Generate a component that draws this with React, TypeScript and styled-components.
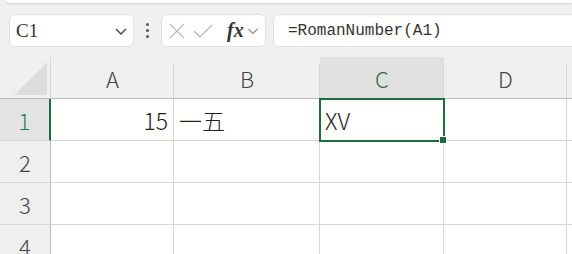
import React from "react";
import styled, { createGlobalStyle } from "styled-components";

const GlobalStyle = createGlobalStyle`
  html, body {
    margin: 0;
    padding: 0;
    background: #f0f0ef;
    overflow: hidden;
  }
  body {
    font-family: "Noto Sans CJK JP", "Noto Sans", sans-serif;
  }
`;

const columns = [
  { name: "A", width: 123 },
  { name: "B", width: 146 },
  { name: "C", width: 124 },
  { name: "D", width: 123 },
];

const rows: { n: number; cells: { text: string; align?: "left" | "right" }[] }[] = [
  { n: 1, cells: [{ text: "15", align: "right" }, { text: "一五" }, { text: "XV" }, { text: "" }] },
  { n: 2, cells: [{ text: "" }, { text: "" }, { text: "" }, { text: "" }] },
  { n: 3, cells: [{ text: "" }, { text: "" }, { text: "" }, { text: "" }] },
  { n: 4, cells: [{ text: "" }, { text: "" }, { text: "" }, { text: "" }] },
];

const App = () => {
  const template = `51px ${columns.map((c) => c.width + "px").join(" ")} 1fr`;
  return (
    <Page>
      <GlobalStyle />
      <Ribbon />
      <Toolbar>
        <NameBox>
          <span>C1</span>
          <Chevron width="16" height="16" viewBox="0 0 16 16">
            <path d="M3 6l5 5 5-5" fill="none" stroke="#444" strokeWidth="1.4" />
          </Chevron>
        </NameBox>
        <Dots>
          <i />
          <i />
          <i />
        </Dots>
        <FxBox>
          <svg width="18" height="18" viewBox="0 0 18 18">
            <path d="M2 2l14 14M16 2L2 16" stroke="#bdbdbd" strokeWidth="1.4" />
          </svg>
          <svg width="22" height="18" viewBox="0 0 22 18">
            <path d="M2 9l6 6L20 3" fill="none" stroke="#bdbdbd" strokeWidth="1.4" />
          </svg>
          <FxLabel>fx</FxLabel>
          <svg width="12" height="12" viewBox="0 0 12 12">
            <path d="M1.5 4l4.5 4.5L10.5 4" fill="none" stroke="#888" strokeWidth="1.1" />
          </svg>
        </FxBox>
        <FormulaBox>=RomanNumber(A1)</FormulaBox>
      </Toolbar>
      <Grid style={{ gridTemplateColumns: template }}>
        <Corner />
        {columns.map((c) => (
          <ColHeader key={c.name} $active={c.name === "C"}>
            {c.name}
          </ColHeader>
        ))}
        <ColHeader $active={false} />
        {rows.map((r) => (
          <React.Fragment key={r.n}>
            <RowHeader $active={r.n === 1}>{r.n}</RowHeader>
            {r.cells.map((cell, i) => (
              <Cell
                key={i}
                $align={cell.align || "left"}
                $selected={r.n === 1 && i === 2}
              >
                {cell.text}
                {r.n === 1 && i === 2 && <Handle />}
              </Cell>
            ))}
            <Cell $align="left" $selected={false} />
          </React.Fragment>
        ))}
      </Grid>
    </Page>
  );
};

export default App;

const Page = styled.div`
  width: 572px;
  height: 254px;
  overflow: hidden;
`;

const Ribbon = styled.div`
  height: 3px;
  margin-left: 6px;
  background: #ffffff;
  border-radius: 0 0 0 6px;
  box-shadow: 0 1px 2px rgba(0, 0, 0, 0.12);
`;

const Toolbar = styled.div`
  display: flex;
  align-items: center;
  height: 33px;
  margin-top: 11px;
  padding-left: 9px;
  margin-bottom: 10px;
`;

const NameBox = styled.div`
  width: 125px;
  height: 33px;
  box-sizing: border-box;
  display: flex;
  align-items: center;
  justify-content: space-between;
  padding: 0 4px 0 6px;
  background: #fffffd;
  border: 1px solid #e2e2e2;
  border-radius: 6px;
  font-family: "Liberation Serif", "DejaVu Serif", serif;
  font-size: 19px;
  color: #333;
`;

const Chevron = styled.svg`
  margin-top: 1px;
`;

const Dots = styled.div`
  width: 27px;
  display: flex;
  flex-direction: column;
  align-items: center;
  gap: 3px;
  i {
    width: 3px;
    height: 3px;
    border-radius: 50%;
    background: #555;
  }
`;

const FxBox = styled.div`
  width: 105px;
  height: 33px;
  box-sizing: border-box;
  display: flex;
  align-items: center;
  padding-left: 6px;
  gap: 6px;
  background: #fffffd;
  border: 1px solid #e2e2e2;
  border-radius: 6px;
`;

const FxLabel = styled.span`
  font-family: "Liberation Serif", "DejaVu Serif", serif;
  font-style: italic;
  font-weight: bold;
  font-size: 20px;
  color: #333;
  margin-left: 7px;
  margin-right: -3px;
`;

const FormulaBox = styled.div`
  flex: 1;
  height: 33px;
  box-sizing: border-box;
  margin-left: 7px;
  margin-right: -8px;
  display: flex;
  align-items: center;
  padding-left: 14px;
  background: #fffffd;
  border: 1px solid #e2e2e2;
  border-radius: 6px;
  font-family: "Liberation Mono", "DejaVu Sans Mono", monospace;
  font-size: 16px;
  color: #333;
`;

const Grid = styled.div`
  display: grid;
  grid-auto-rows: 42px;
`;

const Corner = styled.div`
  position: relative;
  background: #efefee;
  border-bottom: 1px solid #bcbcbc;
  border-right: 1px solid #d6d6d6;
  box-sizing: border-box;
  &::after {
    content: "";
    position: absolute;
    left: 14px;
    right: 3px;
    top: 6px;
    bottom: 3px;
    background: #dcdcdb;
    clip-path: polygon(100% 0, 100% 100%, 0 100%);
  }
`;

const ColHeader = styled.div<{ $active: boolean }>`
  position: relative;
  box-sizing: border-box;
  display: flex;
  align-items: center;
  justify-content: center;
  background: ${(p) => (p.$active ? "#e0e0de" : "#efefee")};
  border-bottom: 1px solid #bcbcbc;
  font-size: 22px;
  font-weight: 300;
  color: ${(p) => (p.$active ? "#1e6b45" : "#444")};
  &::after {
    content: "";
    position: absolute;
    right: 0;
    top: 6px;
    bottom: 0;
    width: 1px;
    background: #d6d6d6;
  }
`;

const RowHeader = styled.div<{ $active: boolean }>`
  box-sizing: border-box;
  display: flex;
  align-items: center;
  justify-content: center;
  background: ${(p) => (p.$active ? "#e3e3e1" : "#efefee")};
  border-right: ${(p) => (p.$active ? "2px solid #1e6b45" : "1px solid #bcbcbc")};
  border-bottom: 1px solid #d6d6d6;
  font-size: 22px;
  font-weight: 300;
  color: ${(p) => (p.$active ? "#1e7a6a" : "#444")};
`;

const Cell = styled.div<{ $align: "left" | "right"; $selected: boolean }>`
  position: relative;
  box-sizing: border-box;
  display: flex;
  align-items: center;
  justify-content: ${(p) => (p.$align === "right" ? "flex-end" : "flex-start")};
  padding: 0 5px;
  background: #fffffd;
  border-right: 1px solid #d6d6d6;
  border-bottom: 1px solid #d6d6d6;
  font-size: 23px;
  font-weight: 300;
  color: #222;
  ${(p) =>
    p.$selected &&
    `
    outline: 2px solid #1e6b45;
    outline-offset: -1px;
    z-index: 1;
  `}
`;

const Handle = styled.span`
  position: absolute;
  right: -4px;
  bottom: -4px;
  width: 6px;
  height: 6px;
  background: #1e6b45;
  border: 1px solid #fffffd;
`;
